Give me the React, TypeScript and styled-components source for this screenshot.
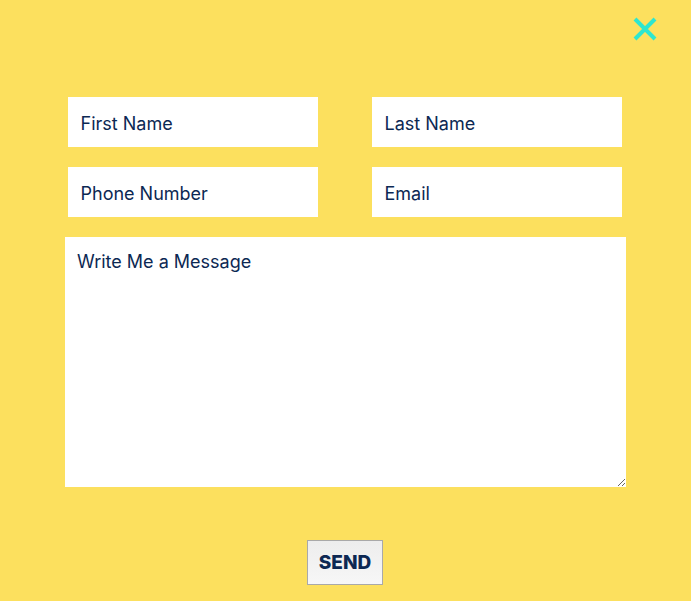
import React from "react";
import styled, { createGlobalStyle } from "styled-components";

const Global = createGlobalStyle`
  html, body { margin: 0; padding: 0; background: #fce05e; }
  body { font-family: Inter, "Noto Sans", sans-serif; }
  * { box-sizing: border-box; }
`;

const Page = styled.div`
  position: relative;
  width: 691px;
  height: 601px;
  background: #fce05e;
  display: flex;
  flex-direction: column;
  align-items: center;
  padding-top: 97px;
`;

const Close = styled.button`
  position: absolute;
  top: 16px;
  right: 33px;
  width: 26px;
  height: 26px;
  padding: 0;
  border: 0;
  background: none;
  cursor: pointer;
`;

const Form = styled.form`
  display: flex;
  flex-direction: column;
  align-items: center;
  gap: 20px;
`;

const Grid = styled.div`
  display: grid;
  grid-template-columns: 250px 250px;
  column-gap: 54px;
  row-gap: 20px;
  margin-left: -2px;
`;

const Field = styled.input`
  width: 250px;
  height: 50px;
  border: 0;
  outline: none;
  background: #fff;
  padding: 2px 13px 0;
  font-family: Inter, "Noto Sans", sans-serif;
  font-size: 18px;
  color: #0c2853;
  &::placeholder { color: #0c2853; opacity: 1; }
`;

const Message = styled.textarea`
  width: 561px;
  height: 250px;
  border: 0;
  outline: none;
  background: #fff;
  padding: 13px 12px;
  font-family: Inter, "Noto Sans", sans-serif;
  font-size: 18px;
  line-height: 24px;
  color: #0c2853;
  resize: both;
  &::placeholder { color: #0c2853; opacity: 1; }
`;

const Send = styled.button`
  margin-top: 33px;
  margin-left: -1px;
  width: 76px;
  height: 45px;
  border: 1px solid #a9a9a9;
  background: linear-gradient(#ededed, #f7f7f7);
  font-family: Inter, "Noto Sans", sans-serif;
  font-weight: 800;
  font-size: 19px;
  color: #0c2853;
  padding: 0;
  cursor: pointer;
`;

export default function App() {
  return (
    <>
      <Global />
      <Page>
        <Close aria-label="Close">
          <svg width="26" height="26" viewBox="0 0 26 26">
            <path d="M3 3 L23 23 M23 3 L3 23" stroke="#2ee6cf" strokeWidth="4" strokeLinecap="butt" />
          </svg>
        </Close>
        <Form onSubmit={(e) => e.preventDefault()}>
          <Grid>
            <Field placeholder="First Name" />
            <Field placeholder="Last Name" />
            <Field placeholder="Phone Number" />
            <Field placeholder="Email" />
          </Grid>
          <Message placeholder="Write Me a Message" />
          <Send type="submit">SEND</Send>
        </Form>
      </Page>
    </>
  );
}
